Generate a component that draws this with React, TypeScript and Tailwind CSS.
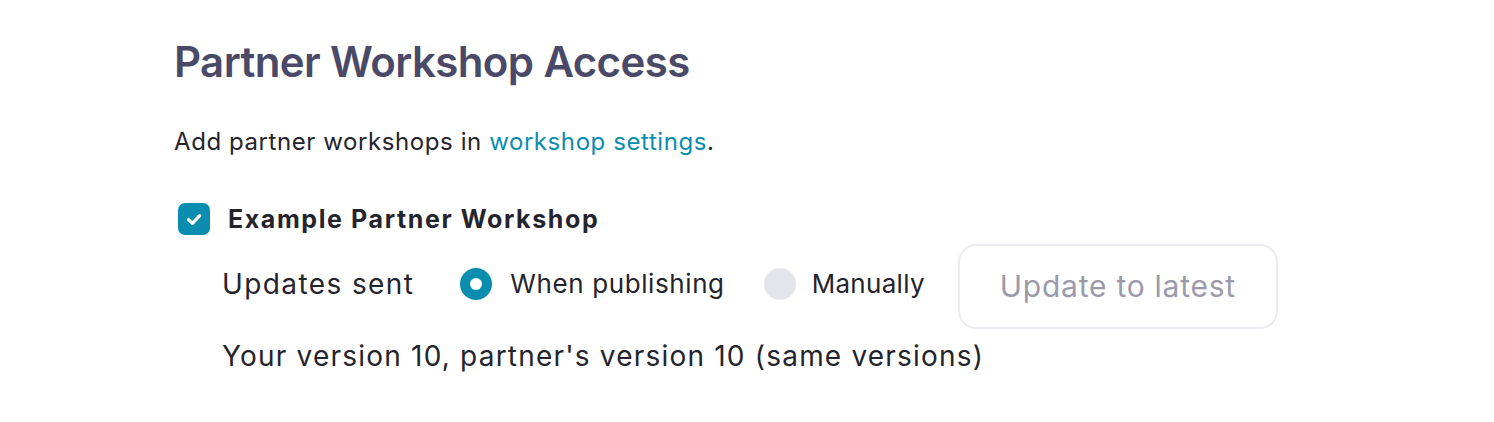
import React from 'react';

export default function App() {
  return (
    <div className="min-h-[422px] bg-white pl-[174px] pt-[38px] font-['Inter',sans-serif] text-[#24242c]">
      <h1 className="text-[42px] font-semibold leading-[48px] tracking-[-0.6px] text-[#4a4a68]">
        Partner Workshop Access
      </h1>
      <p className="mt-[41px] text-[24px] leading-[30px] tracking-[0.58px]">
        Add partner workshops in{' '}
        <a href="#" className="text-[#0b8db0]">
          workshop settings
        </a>
        .
      </p>
      <div className="mt-[46px] flex items-center gap-[18px] pl-[4px]">
        <span className="flex h-[32px] w-[32px] items-center justify-center rounded-[7px] bg-[#0b8db0]">
          <svg width="22" height="22" viewBox="0 0 16 16" fill="none">
            <path d="M4 8.4l2.9 2.8 5.2-5.6" stroke="white" strokeWidth="2.3" strokeLinecap="round" strokeLinejoin="round" />
          </svg>
        </span>
        <span className="text-[25px] font-bold leading-[32px] tracking-[1.6px]">Example Partner Workshop</span>
      </div>
      <div className="ml-[48px] mt-[3px] flex items-center">
        <span className="text-[28px] leading-[36px] tracking-[1.4px]">Updates sent</span>
        <label className="ml-[46px] flex items-center gap-[18px]">
          <span className="flex h-[32px] w-[32px] items-center justify-center rounded-full bg-[#0b8db0]">
            <span className="h-[12px] w-[12px] rounded-full bg-white" />
          </span>
          <span className="text-[26px] leading-[34px] tracking-[0.6px]">When publishing</span>
        </label>
        <label className="ml-[39px] flex items-center gap-[16px]">
          <span className="h-[32px] w-[32px] rounded-full bg-[#e4e4ec]" />
          <span className="text-[26px] leading-[34px] tracking-[0.3px]">Manually</span>
        </label>
        <button className="ml-[33px] mt-[6px] flex h-[85px] w-[320px] items-center justify-center rounded-[18px] border-2 border-[#ececf2] text-[30px] tracking-[0.75px] text-[#9a9aab]">
          Update to latest
        </button>
      </div>
      <p className="ml-[48px] mt-[9px] text-[28px] leading-[36px] tracking-[1.2px]">
        Your version 10, partner's version 10 (same versions)
      </p>
    </div>
  );
}
